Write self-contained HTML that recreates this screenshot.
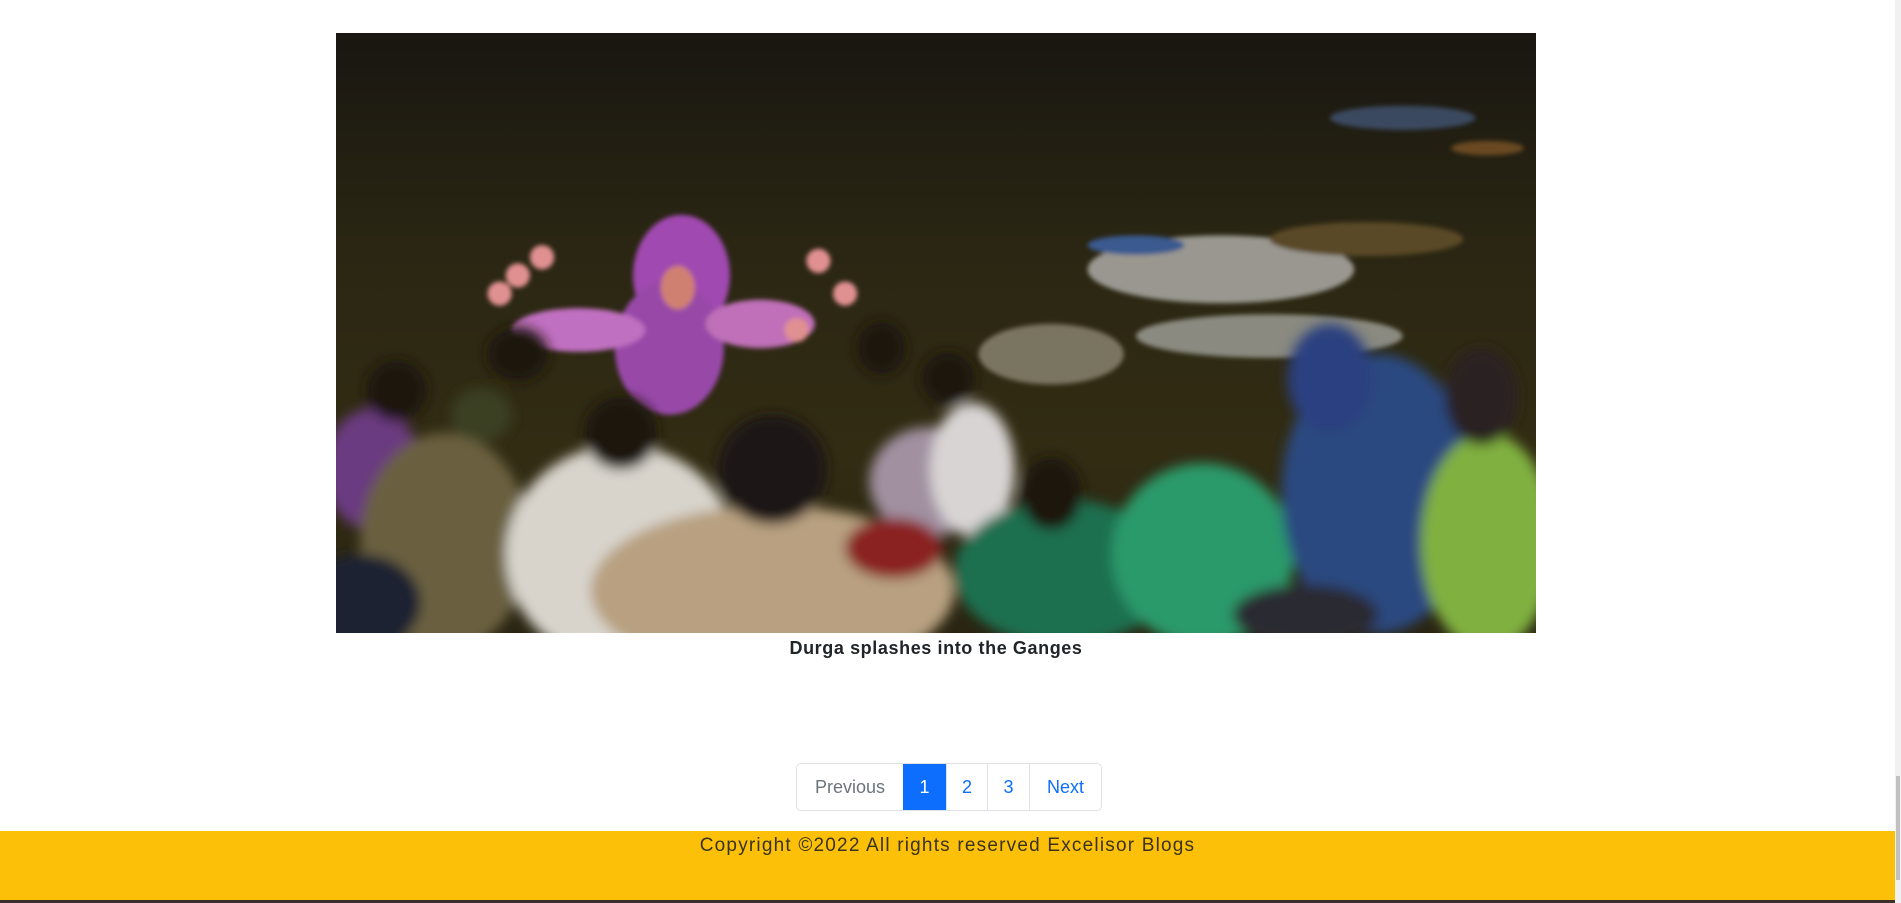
<!DOCTYPE html>
<html><head><meta charset="utf-8"><style>
html,body{margin:0;padding:0;background:#fff;width:1901px;height:903px;overflow:hidden;font-family:"Liberation Sans",sans-serif}
.img{position:absolute;left:336px;top:33px;width:1200px;height:600px;overflow:hidden}
.cap{position:absolute;left:336px;width:1200px;top:638px;text-align:center;font-weight:bold;font-size:18px;color:#212529;letter-spacing:0.6px}
.pg{position:absolute;left:796px;top:763px;height:48px;display:flex;border:1px solid #dee2e6;border-radius:5px;box-sizing:border-box;font-size:18px}
.pg div{display:flex;align-items:center;justify-content:center;color:#0d6efd;border-left:1px solid #dee2e6;box-sizing:border-box}
.pg div:first-child{border-left:none;color:#6c757d}
.pg .a{background:#0d6efd;color:#fff;border-left:none}
.ft{position:absolute;left:0;top:831px;width:1895px;height:69px;background:#fdc008;text-align:center;font-size:19px;color:#3a3320;line-height:30px;letter-spacing:1.2px}
.strip{position:absolute;left:0;top:900px;width:1895px;height:3px;background:#3a2f2a}
.sb{position:absolute;right:0;top:0;width:6px;height:903px;background:#f1f1f1}
.sb i{position:absolute;left:1px;top:776px;width:4px;height:104px;background:#c1c1c1}
</style></head><body>
<div class="img">
<svg width="1200" height="600" viewBox="0 0 990 495" preserveAspectRatio="none">
<defs>
<linearGradient id="w" x1="0" y1="0" x2="0" y2="1"><stop offset="0" stop-color="#191611"/><stop offset=".35" stop-color="#2a2613"/><stop offset=".7" stop-color="#322c13"/><stop offset="1" stop-color="#2a2512"/></linearGradient>
<filter id="b"><feGaussianBlur stdDeviation="5"/></filter>
<filter id="b2"><feGaussianBlur stdDeviation="2"/></filter>
</defs>
<rect width="990" height="495" fill="url(#w)"/>
<g filter="url(#b2)">
<ellipse cx="880" cy="70" rx="60" ry="10" fill="#3a4a60"/>
<ellipse cx="950" cy="95" rx="30" ry="6" fill="#6a4a20"/>
<ellipse cx="730" cy="195" rx="110" ry="28" fill="#9a9790"/>
<ellipse cx="660" cy="175" rx="40" ry="8" fill="#3a5a90"/>
<ellipse cx="770" cy="250" rx="110" ry="18" fill="#8a8a80"/>
<ellipse cx="590" cy="265" rx="60" ry="25" fill="#7a7560"/>
<ellipse cx="850" cy="170" rx="80" ry="14" fill="#5a4a25"/>
</g>
<g filter="url(#b2)">
<ellipse cx="285" cy="200" rx="40" ry="50" fill="#a04ab0"/>
<ellipse cx="275" cy="260" rx="45" ry="55" fill="#9848a8"/>
<ellipse cx="200" cy="245" rx="55" ry="18" fill="#c070c0"/>
<ellipse cx="350" cy="240" rx="45" ry="20" fill="#c070b8"/>
<circle cx="150" cy="200" r="10" fill="#e09090"/><circle cx="170" cy="185" r="10" fill="#e09090"/>
<circle cx="135" cy="215" r="10" fill="#e09090"/><circle cx="398" cy="188" r="10" fill="#e09090"/>
<circle cx="420" cy="215" r="10" fill="#e09090"/><circle cx="380" cy="245" r="10" fill="#e09090"/>
<ellipse cx="282" cy="210" rx="14" ry="18" fill="#d08070"/>
</g>
<g filter="url(#b)">
<ellipse cx="30" cy="360" rx="40" ry="50" fill="#6a3a80"/>
<ellipse cx="90" cy="420" rx="70" ry="90" fill="#6a6040"/>
<ellipse cx="120" cy="315" rx="25" ry="22" fill="#3a4020"/>
<ellipse cx="150" cy="265" rx="25" ry="22" fill="#1a1410"/>
<ellipse cx="50" cy="295" rx="25" ry="25" fill="#1a1410"/>
<ellipse cx="235" cy="430" rx="95" ry="90" fill="#d8d4cc"/>
<ellipse cx="235" cy="330" rx="30" ry="30" fill="#1a1410"/>
<ellipse cx="360" cy="460" rx="150" ry="70" fill="#b8a080"/>
<ellipse cx="360" cy="360" rx="45" ry="45" fill="#1a1512"/>
<ellipse cx="490" cy="370" rx="50" ry="45" fill="#a090a0"/>
<ellipse cx="525" cy="360" rx="35" ry="55" fill="#d8d4d4"/>
<ellipse cx="505" cy="285" rx="22" ry="22" fill="#1a1410"/>
<ellipse cx="450" cy="260" rx="20" ry="22" fill="#1a1410"/>
<ellipse cx="460" cy="425" rx="40" ry="25" fill="#8a2020"/>
<ellipse cx="600" cy="445" rx="90" ry="60" fill="#1e7050"/>
<ellipse cx="590" cy="380" rx="25" ry="30" fill="#1a1410"/>
<ellipse cx="715" cy="430" rx="75" ry="75" fill="#2a9a6a"/>
<ellipse cx="860" cy="380" rx="80" ry="115" fill="#2a4a80"/>
<ellipse cx="820" cy="285" rx="35" ry="45" fill="#2a4080"/>
<ellipse cx="950" cy="420" rx="55" ry="90" fill="#80b040"/>
<ellipse cx="945" cy="300" rx="30" ry="40" fill="#2a2420"/>
<ellipse cx="20" cy="470" rx="50" ry="40" fill="#1a2030"/>
<ellipse cx="800" cy="480" rx="60" ry="25" fill="#2a2a30"/>
</g>
</svg>
</div>
<div class="cap">Durga splashes into the Ganges</div>
<div class="pg">
<div style="width:106px">Previous</div>
<div class="a" style="width:43px">1</div>
<div style="width:41px">2</div>
<div style="width:42px">3</div>
<div style="width:72px">Next</div>
</div>
<div class="ft">Copyright ©2022 All rights reserved Excelisor Blogs</div>
<div class="strip"></div>
<div class="sb"><i></i></div>
</body></html>
